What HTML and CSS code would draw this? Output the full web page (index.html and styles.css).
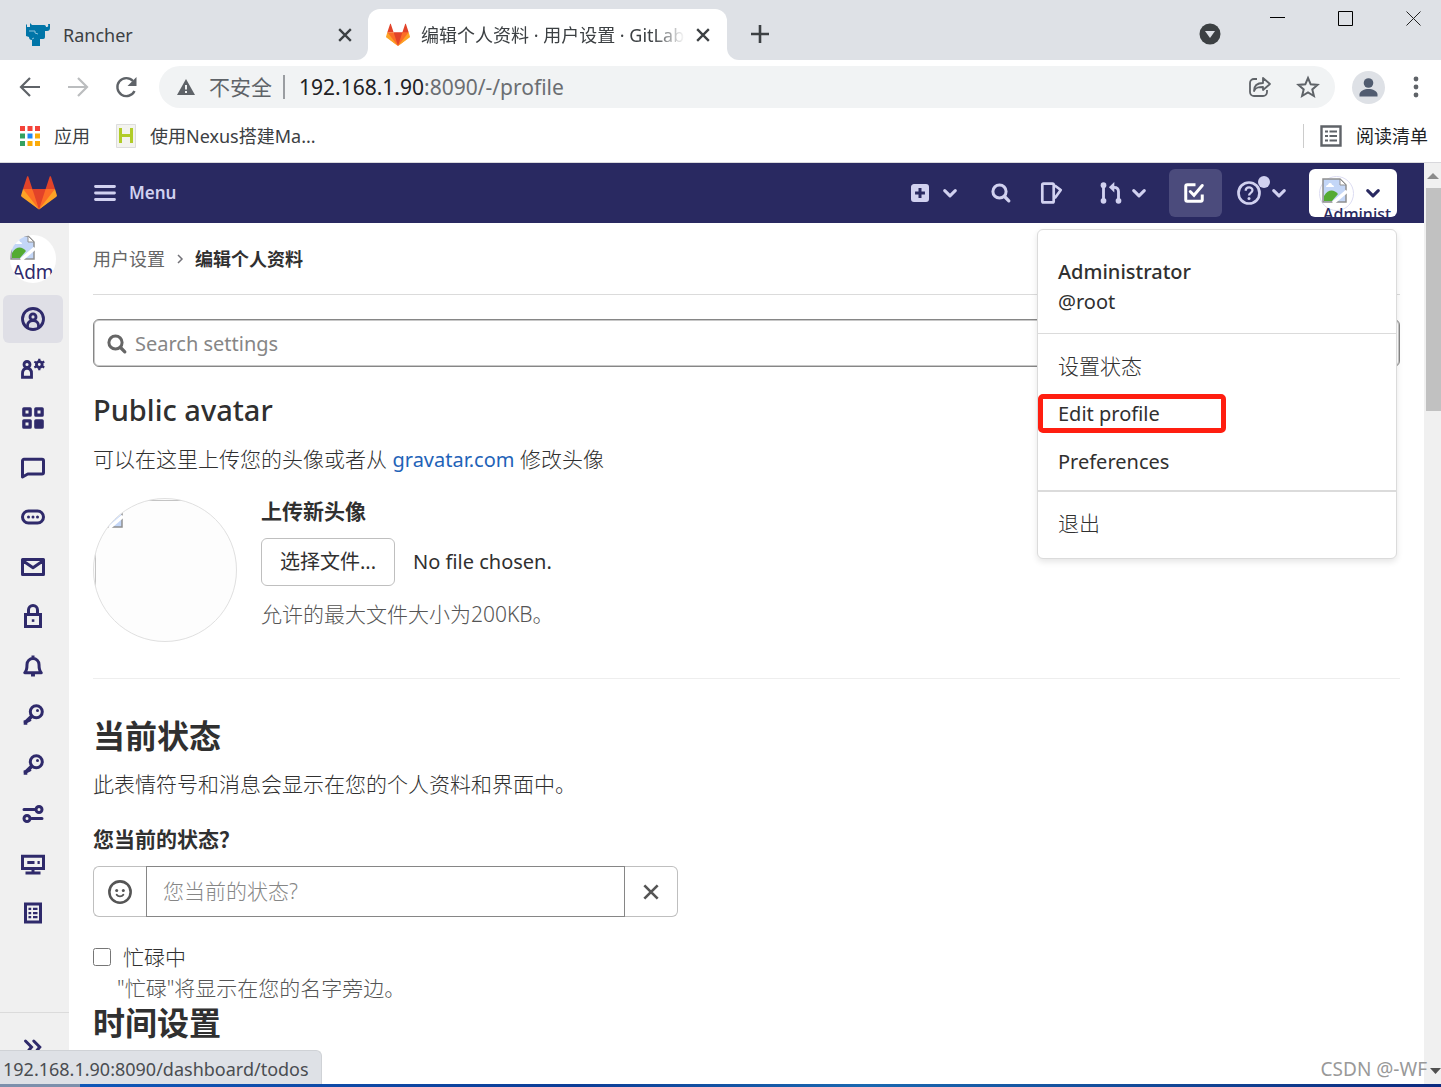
FILE: index.html
```html
<!DOCTYPE html>
<html lang="zh-CN">
<head>
<meta charset="utf-8">
<title>编辑个人资料 · 用户设置 · GitLab</title>
<link rel="stylesheet" href="styles.css">
</head>
<body>
<svg class="defs" aria-hidden="true">
  <symbol id="tanuki" viewBox="0 0 36 36">
    <path fill="#e24329" d="M2 14l9.38 9v-9l-4-12.28c-.205-.632-1.176-.632-1.38 0zM34 14l-9.38 9v-9l4-12.28c.205-.632 1.176-.632 1.38 0zM18 34.38L3 14h30z"/>
    <path fill="#fc6d26" d="M18 34.38L11.38 14H2l4 11zM18 34.38L24.62 14H34l-4 11z"/>
    <path fill="#fca326" d="M2 14L.1 20.16c-.18.565 0 1.2.5 1.56l17.42 12.66zM34 14l1.9 6.16c.18.565 0 1.2-.5 1.56L18 34.38z"/>
  </symbol>
  <symbol id="close" viewBox="0 0 12 12"><path d="M1 1l10 10M11 1L1 11" fill="none" stroke="currentColor" stroke-width="2"/></symbol>
  <symbol id="chevron" viewBox="0 0 12 12"><path d="M1.500 4L6 8.500 10.500 4" fill="none" stroke="currentColor" stroke-width="2.600" stroke-linecap="round" stroke-linejoin="round"/></symbol>
  <symbol id="search" viewBox="0 0 16 16"><circle cx="7" cy="7" r="4.400" fill="none" stroke="currentColor" stroke-width="2"/><path d="M10.500 10.500l2.700 2.700" fill="none" stroke="currentColor" stroke-width="2.200" stroke-linecap="round"/></symbol>
  <symbol id="key" viewBox="0 0 16 16"><circle cx="10.200" cy="5.800" r="4" fill="none" stroke="currentColor" stroke-width="2"/><circle cx="11" cy="5" r="1" fill="currentColor"/><path d="M7.600 8.400L2.300 13.600M3 11.500v3M5 10.800l1 1.600" fill="none" stroke="currentColor" stroke-width="2.400"/></symbol>
  <symbol id="broken" viewBox="0 0 26 26">
    <path fill="#c3d6f7" stroke="#8f8f8f" stroke-width="1.500" d="M1 1h17l6 6v17H1z"/>
    <path fill="#fff" d="M4 9c0-2 2-2 2-2 1-3 4-2 4 0 2 0 2 2 2 2z"/>
    <path fill="#54ab33" d="M2 23v-5c4-7 10-7 14-2l-6 7z"/>
    <path fill="#fff" stroke="#8f8f8f" d="M18 1v6h6z"/>
    <path stroke="#fff" stroke-width="3.500" d="M11 25L25 13"/>
  </symbol>
</svg>

<div class="tabstrip">
  <div class="tab">
    <svg class="i24" viewBox="0 0 24 24" fill="#0075a8"><path d="M0 2l1-1v3h3V0l2 2h12c2 0 2 2 2 2h1c2 0 1-3 1-3h2v4c0 2-1 3-3 3h-2v6c0 2-2 2-2 2h-3v7H6v-6c-2 0-3-1-3-3l-3-1z"/><path d="M3 8h6v2l3 1M6 16l2-1" stroke="#8dc3dc" fill="none"/></svg>
    <span class="tab-title">Rancher</span>
    <button class="plain" aria-label="关闭"><svg class="i12"><use href="#close"/></svg></button>
  </div>
  <div class="slot"><div class="tab active">
    <svg class="i24"><use href="#tanuki"/></svg>
    <span class="tab-title fade">编辑个人资料 · 用户设置 · GitLab</span>
    <button class="plain" aria-label="关闭"><svg class="i12"><use href="#close"/></svg></button>
  </div></div>
  <div class="strip-rest">
    <button class="plain new" aria-label="新标签页"><svg class="i18" viewBox="0 0 18 18"><path d="M9 0v18M0 9h18" stroke="currentColor" stroke-width="2.600"/></svg></button>
    <button class="plain tabs-menu" aria-label="搜索标签页"><svg width="22" height="22" viewBox="0 0 22 22"><circle cx="11" cy="11" r="10.500" fill="#3c4043"/><path d="M6 8h10l-5 7z" fill="#dee1e6"/></svg></button>
    <div class="window">
      <button class="plain" aria-label="最小化"><svg class="i16" viewBox="0 0 16 16"><path d="M0 6.500h15" stroke="#000"/></svg></button>
      <button class="plain" aria-label="最大化"><svg class="i16" viewBox="0 0 16 16"><path d="M.5.500h14v14H.5z" fill="none" stroke="#000"/></svg></button>
      <button class="plain" aria-label="关闭窗口"><svg class="i16" viewBox="0 0 16 16"><path d="M.5.500l14 14M14.500.500l-14 14" stroke="#222"/></svg></button>
    </div>
  </div>
</div>

<div class="toolbar">
  <button class="plain" aria-label="后退"><svg class="i24" viewBox="0 0 24 24"><path d="M22 12H3M12 3l-9 9 9 9" fill="none" stroke="#5f6368" stroke-width="2.200"/></svg></button>
  <button class="plain" aria-label="前进"><svg class="i24" viewBox="0 0 24 24"><path d="M2 12h19M12 3l9 9-9 9" fill="none" stroke="#bbbdbf" stroke-width="2.200"/></svg></button>
  <button class="plain" aria-label="重新加载"><svg class="i24" viewBox="0 0 24 24"><path d="M20.500 16A9 9 0 1 1 19 6" fill="none" stroke="#5f6368" stroke-width="2.400"/><path d="M22.500 2v9h-9z" fill="#5f6368"/></svg></button>
  <div class="omnibox">
    <svg class="i18 warn" viewBox="0 0 18 18"><path d="M9 1l9 16H0z" fill="#5f6368"/><path d="M9 7v4.500M9 13v2" stroke="#f1f3f4" stroke-width="2"/></svg>
    <span class="insecure">不安全</span>
    <span class="url"><b>192.168.1.90</b>:8090/-/profile</span>
    <button class="plain" aria-label="分享"><svg class="i24" viewBox="0 0 24 24" fill="none" stroke="#5f6368" stroke-width="1.800"><path d="M9 4H6a4 4 0 0 0-4 4v9a4 4 0 0 0 4 4h9a4 4 0 0 0 4-4v-2"/><path d="M6 16c0-6 3-8 9-8V3l7 6-7 6v-3c-4 0-7 0-9 4z" stroke-linejoin="round"/></svg></button>
    <button class="plain" aria-label="收藏"><svg class="i24" viewBox="0 0 24 24"><path d="M12 3l2.700 6.300 6.800.600-5.200 4.500 1.600 6.600-5.900-3.500L6.100 21l1.600-6.600L2.500 9.900l6.800-.600z" fill="none" stroke="#5f6368" stroke-width="2"/></svg></button>
  </div>
  <button class="plain account" aria-label="用户"><svg width="33" height="33" viewBox="0 0 33 33"><circle cx="16.500" cy="16.500" r="16.500" fill="#dee1e6"/><g fill="#515c70"><circle cx="16.500" cy="12" r="4.800"/><path d="M7.500 25.500v-2c0-3.500 5-5.500 9-5.500s9 2 9 5.500v2z"/></g></svg></button>
  <button class="plain more" aria-label="更多"><svg width="6" height="22" viewBox="0 0 6 22" fill="#5f6368"><circle cx="3" cy="3" r="2.400"/><circle cx="3" cy="11" r="2.400"/><circle cx="3" cy="19" r="2.400"/></svg></button>
</div>

<nav class="bookmarks">
  <a href="#"><svg width="20" height="20" viewBox="0 0 20 20"><path fill="#f4433a" d="M0 0h5v5H0zM7.500 0h5v5h-5zM15 0h5v5h-5z"/><path fill="#34a160" d="M0 7.500h5v5H0zM0 15h5v5H0z"/><path fill="#2088f5" d="M7.500 7.500h5v5h-5z"/><path fill="#fbab08" d="M15 7.500h5v5h-5zM7.500 15h5v5h-5zM15 15h5v5h-5z"/></svg>应用</a>
  <a href="#"><svg width="20" height="24" viewBox="0 0 20 24"><path d="M.5.500h19v23H.5z" fill="#f3f3ee" stroke="#ddd"/><path d="M4.500 4v15M15.500 4v15M4.500 11.500h11" stroke="#b1cc28" stroke-width="3"/></svg>使用Nexus搭建Ma...</a>
  <a href="#" class="reading"><svg width="22" height="22" viewBox="0 0 22 22"><path d="M1.500 1.500h19v19h-19z" fill="none" stroke="#5f6368" stroke-width="2.400"/><path d="M5 6.500h3M5 11h3M5 15.500h3M9.500 6.500H17M9.500 11H17M9.500 15.500H17" stroke="#5f6368" stroke-width="2"/></svg>阅读清单</a>
</nav>

<div class="viewport">
  <div class="page">
    <header class="navbar">
      <a href="#" class="logo" aria-label="GitLab"><svg class="i36"><use href="#tanuki"/></svg></a>
      <button class="plain menu-btn"><svg width="22" height="18" viewBox="0 0 22 18"><path d="M1.500 2.500h19M1.500 9h19M1.500 15.500h19" stroke="currentColor" stroke-width="2.800" stroke-linecap="round"/></svg>Menu</button>
      <div class="tools">
        <button class="plain pair new-menu" aria-label="新建"><svg class="i24" viewBox="0 0 16 16"><path fill="currentColor" fill-rule="evenodd" d="M4 2h8a2 2 0 0 1 2 2v8a2 2 0 0 1-2 2H4a2 2 0 0 1-2-2V4c0-1.100.9-2 2-2zm3 2.700V7H4.700v2H7v2.300h2V9h2.300V7H9V4.700z"/></svg><svg class="i12"><use href="#chevron"/></svg></button>
        <button class="plain search-btn" aria-label="搜索"><svg class="i24"><use href="#search"/></svg></button>
        <a href="#" class="issues" aria-label="议题"><svg class="i24" viewBox="0 0 16 16" fill="none" stroke="currentColor" stroke-width="1.800" stroke-linejoin="round"><path d="M3 1.700h6a.8.800 0 0 1 .8.800v11a.8.800 0 0 1-.8.800H3a.8.800 0 0 1-.8-.8v-11a.8.800 0 0 1 .8-.8zM10.500 3l4 3-4 5.500"/></svg></a>
        <button class="plain pair merge" aria-label="合并请求"><svg class="i24" viewBox="0 0 16 16" fill="none" stroke="currentColor" stroke-width="1.900"><path d="M3 3v10M8.500 4.200H10c2 0 3 1 3 3V13"/><g fill="currentColor" stroke="none"><circle cx="3" cy="2.800" r="1.900"/><circle cx="3" cy="13.200" r="1.900"/><circle cx="13" cy="13.200" r="1.900"/><path d="M10.200.700v7L6.600 4.200z"/></g></svg><svg class="i12"><use href="#chevron"/></svg></button>
        <a href="#" class="todo" aria-label="待办事项"><svg class="i24" viewBox="0 0 16 16" fill="none" stroke="#fff" stroke-width="2"><path d="M9 2.500H3.500a1 1 0 0 0-1 1v9a1 1 0 0 0 1 1h9a1 1 0 0 0 1-1V9"/><path d="M5.500 7L8 9.500l5.500-6.500" stroke-linecap="round"/></svg></a>
        <button class="plain pair help" aria-label="帮助"><svg class="i24" viewBox="0 0 16 16"><circle cx="8" cy="8" r="7" fill="none" stroke="currentColor" stroke-width="1.800"/><path d="M5.800 6.500C5.800 3.500 10.300 3.600 10.300 6.200 10.300 8 8 7.800 8 9.700" fill="none" stroke="currentColor" stroke-width="1.500"/><circle cx="8" cy="11.700" r="1" fill="currentColor"/></svg><i class="dot"></i><svg class="i12"><use href="#chevron"/></svg></button>
        <button class="plain user" aria-label="Administrator">
          <span class="user-avatar"><svg width="26" height="26"><use href="#broken"/></svg></span>
          <svg class="i12"><use href="#chevron"/></svg>
          <span class="user-alt">Administ</span>
        </button>
      </div>
    </header>

    <div class="body">
      <aside class="sidebar">
        <a href="#" class="side-avatar"><svg width="26" height="26"><use href="#broken"/></svg><span>Adm</span></a>
        <nav class="side-nav">
          <a href="#" class="current" aria-label="个人资料"><svg class="i24" viewBox="0 0 16 16" fill="none" stroke="currentColor" stroke-width="1.900"><circle cx="8" cy="8" r="7"/><circle cx="8" cy="6.600" r="2"/><path d="M4.300 13.500v-1c0-2 1.500-3.500 3.700-3.500s3.700 1.500 3.700 3.500v1"/></svg></a>
          <a href="#" aria-label="账户"><svg class="i24" viewBox="0 0 16 16" fill="none" stroke="currentColor" stroke-width="1.900"><circle cx="4" cy="5" r="2"/><path d="M1 13.500V11c0-2 1-3.500 3-3.500S7 9 7 11v2.500z"/><circle cx="12.200" cy="5" r="1.900"/><path d="M12.200 1.200v2M12.200 6.800v2M8.900 3.100l1.700 1M13.800 6l1.700 1M8.900 7l1.700-1M13.800 4l1.700-1" stroke-width="1.500"/></svg></a>
          <a href="#" aria-label="应用"><svg class="i24" viewBox="0 0 16 16" fill="none" stroke="currentColor" stroke-width="2.200" stroke-linejoin="round"><path d="M1.900 1.900h4.200v4.200H1.900zM9.900 1.900h4.200v4.200H9.900zM1.900 9.900h4.200v4.200H1.900z"/><path d="M9.900 9.900h4.200v4.200H9.900z" fill="currentColor"/></svg></a>
          <a href="#" aria-label="聊天"><svg class="i24" viewBox="0 0 16 16" fill="none" stroke="currentColor" stroke-width="2" stroke-linejoin="round"><path d="M1 14V3.200a1 1 0 0 1 1-1h12a1 1 0 0 1 1 1V11a1 1 0 0 1-1 1H4.500z"/></svg></a>
          <a href="#" aria-label="访问令牌"><svg class="i24" viewBox="0 0 16 16"><rect x="1" y="4" width="14" height="8" rx="4" fill="none" stroke="currentColor" stroke-width="2"/><g fill="currentColor"><circle cx="5" cy="8" r="1"/><circle cx="8" cy="8" r="1"/><circle cx="11" cy="8" r="1"/></g></svg></a>
          <a href="#" aria-label="电子邮件"><svg class="i24" viewBox="0 0 16 16" fill="none" stroke="currentColor" stroke-width="2" stroke-linejoin="round"><path d="M1 3h14v10H1zM1.500 4L8 8.500 14.500 4"/></svg></a>
          <a href="#" aria-label="密码"><svg class="i24" viewBox="0 0 16 16" fill="none" stroke="currentColor" stroke-width="2"><path d="M3 7h10v8H3zM5 7V4a3 3 0 0 1 6 0v3"/><path d="M7.200 10.200h1.700v1.700H7.200z" fill="currentColor" stroke="none"/></svg></a>
          <a href="#" aria-label="通知"><svg class="i24" viewBox="0 0 16 16" fill="none" stroke="currentColor" stroke-width="2" stroke-linejoin="round"><path d="M2.500 12.500h11c-1.500-1.500-1.500-3-1.500-5.500a4 4 0 0 0-8 0c0 2.500 0 4-1.500 5.500z"/><path d="M8 1v1.500M6.700 14h2.600"/></svg></a>
          <a href="#" aria-label="SSH 密钥"><svg class="i24"><use href="#key"/></svg></a>
          <a href="#" aria-label="GPG 密钥"><svg class="i24"><use href="#key"/></svg></a>
          <a href="#" aria-label="偏好设置"><svg class="i24" viewBox="0 0 16 16" fill="none" stroke="currentColor" stroke-width="2" stroke-linecap="round"><path d="M2 5h7M7 11h7"/><circle cx="12" cy="5" r="2"/><circle cx="4" cy="11" r="2"/></svg></a>
          <a href="#" aria-label="活动会话"><svg class="i24" viewBox="0 0 16 16" fill="none" stroke="currentColor" stroke-width="2"><path d="M1 2.900h14V11H1zM3 14h10M8 11v3M4.200 7H9M11 7h1.500"/></svg></a>
          <a href="#" aria-label="验证日志"><svg class="i24" viewBox="0 0 16 16" fill="none" stroke="currentColor" stroke-width="2"><path d="M3 2h10v12H3z"/><path d="M5 5.200h1.800M8 5.200h3M5 8h1.800M8 8h3M5 10.800h1.800M8 10.800h3" stroke-width="1.500"/></svg></a>
        </nav>
        <button class="plain collapse" aria-label="收起侧边栏"><svg class="i24" viewBox="0 0 16 16" fill="none" stroke="currentColor" stroke-width="2" stroke-linecap="round"><path d="M3 4l4 4-4 5M8.500 4l4 4-4 5"/></svg></button>
      </aside>

      <main class="content">
        <nav class="crumbs"><a href="#">用户设置</a><svg width="8" height="12" viewBox="0 0 8 12"><path d="M2 2l4 4-4 4" fill="none" stroke="#737278" stroke-width="1.500"/></svg><a href="#" class="here">编辑个人资料</a></nav>
        <label class="search"><svg class="i24"><use href="#search"/></svg><input type="search" placeholder="Search settings" aria-label="Search settings"></label>
        <h4>Public avatar</h4>
        <p class="intro">可以在这里上传您的头像或者从 <a href="#">gravatar.com</a> 修改头像</p>
        <section class="avatar-row">
          <div class="big-avatar"><div class="frame"><svg width="26" height="26"><use href="#broken"/></svg></div></div>
          <div>
            <h5>上传新头像</h5>
            <div class="file"><button class="choose">选择文件...</button><span>No file chosen.</span></div>
            <p class="hint">允许的最大文件大小为200KB。</p>
          </div>
        </section>
        <hr>
        <h2>当前状态</h2>
        <p class="status-intro">此表情符号和消息会显示在您的个人资料和界面中。</p>
        <label class="field-label" for="status">您当前的状态？</label>
        <div class="group">
          <button aria-label="表情"><svg class="i24" viewBox="0 0 16 16"><circle cx="8" cy="8" r="7.100" fill="none" stroke="currentColor" stroke-width="1.700"/><circle cx="5.800" cy="7" r="1" fill="currentColor"/><circle cx="10.200" cy="7" r="1" fill="currentColor"/><path d="M5.800 9.800c1 1.500 3.400 1.500 4.400 0" fill="none" stroke="currentColor" stroke-width="1.300" stroke-linecap="round"/></svg></button>
          <input id="status" type="text" placeholder="您当前的状态?">
          <button aria-label="清除状态"><svg class="i16"><use href="#close"/></svg></button>
        </div>
        <div class="check"><input type="checkbox" id="busy"><label for="busy">忙碌中</label></div>
        <p class="busy-help">"忙碌"将显示在您的名字旁边。</p>
        <h2 class="time">时间设置</h2>
      </main>
    </div>

    <div class="dropdown">
      <a href="#" class="who"><strong>Administrator</strong><span>@root</span></a>
      <div class="items">
        <a href="#">设置状态</a>
        <a href="#" class="marked">Edit profile</a>
        <a href="#">Preferences</a>
      </div>
      <div class="items last"><a href="#">退出</a></div>
    </div>
  </div>
  <div class="scrollbar"><svg width="17" height="25" viewBox="0 0 17 25"><path d="M3 16h12L9 10z" fill="#8b8b8b"/></svg><i></i><svg class="down" width="17" height="25" viewBox="0 0 17 25"><path d="M6 9h11l-5.500 6z" fill="#505050"/></svg></div>
  <div class="link-status">192.168.1.90:8090/dashboard/todos</div>
  <div class="watermark">CSDN @-WF</div>
</div>
<div class="taskbar"></div>
</body>
</html>
```

FILE: styles.css
```css
*, ::before, ::after { box-sizing: border-box; margin: 0; padding: 0; }
body {
  height: 100vh;
  display: flex;
  flex-direction: column;
  overflow: hidden;
  background: #fff;
  color: #303030;
  font: 20px/30px "Noto Sans", "Noto Sans CJK SC", sans-serif;
}
svg { display: block; flex: none; }
a { color: inherit; text-decoration: none; }
input, button { font: inherit; color: inherit; }
.defs { position: absolute; width: 0; height: 0; }
.plain { background: none; border: 0; display: flex; align-items: center; flex: none; }
.i12 { width: 14px; height: 14px; }
.i16 { width: 16px; height: 16px; }
.i18 { width: 18px; height: 18px; }
.i24 { width: 24px; height: 24px; }
.i36 { width: 36px; height: 36px; }

/* Browser tabs */
.tabstrip { display: flex; height: 60px; flex: none; color: #3c4043; font-size: 18px; }
.tab { width: 368px; padding: 9px 16px 0 26px; display: flex; align-items: center; gap: 13px; background: #dee1e6; border-radius: 0 0 12px 0; }
.tab-title { flex: 1; min-width: 0; white-space: nowrap; overflow: hidden; }
.slot { background: #dee1e6; padding-top: 9px; }
.tab.active { width: 359px; height: 51px; padding: 0 17px 0 18px; gap: 11px; background: #fff; border-radius: 12px 12px 0 0; }
.fade { mask-image: linear-gradient(90deg, #000 88%, transparent); }
.strip-rest { flex: 1; display: flex; background: #dee1e6; border-radius: 0 0 0 12px; padding-left: 24px; }
.new { padding-top: 8px; }
.tabs-menu { margin-left: auto; padding-top: 8px; }
.window { display: flex; align-items: flex-start; gap: 52px; padding: 11px 19px 0 49px; }

/* Address bar */
.toolbar { display: flex; align-items: center; height: 54px; flex: none; padding: 0 22px 0 18px; gap: 24px; }
.omnibox { flex: 1; height: 42px; margin-left: -3px; border-radius: 21px; background: #f1f3f4; display: flex; align-items: center; padding: 0 15px 0 18px; gap: 24px; }
.insecure { margin-left: -10px; padding-right: 11px; border-right: 2px solid #9a9da1; line-height: 24px; font-size: 21px; color: #5f6368; }
.url { flex: 1; margin-left: -10px; font-size: 21px; color: #6b6e72; }
.url b { font-weight: 400; color: #202124; }
.account { margin-left: -7px; }
.more { margin-left: 4px; }

/* Bookmarks */
.bookmarks { display: flex; align-items: center; height: 49px; flex: none; padding: 0 13px 5px 20px; gap: 26px; border-bottom: 1px solid #d8d8dc; font-size: 18px; color: #3c4043; }
.bookmarks a { display: flex; align-items: center; gap: 14px; }
.reading { margin-left: auto; border-left: 1px solid #ccc; padding-left: 16px; line-height: 24px; color: #202124; }

/* Viewport */
.viewport { flex: 1; min-height: 0; display: flex; position: relative; }
.page { flex: 1; min-width: 0; display: flex; flex-direction: column; position: relative; overflow: hidden; }
.scrollbar { width: 17px; background: #f0f0f0; display: flex; flex-direction: column; }
.scrollbar i { height: 223px; margin-left: 2px; background: #c1c1c1; }
.scrollbar .down { margin-top: auto; }
.taskbar { height: 3px; flex: none; background: linear-gradient(90deg, #7c90ac 80px, #1058b8 80px, #0c3d97 40%, #1a68b0 60%, #0b2a80); }

/* GitLab navigation bar */
.navbar { height: 60px; flex: none; display: flex; align-items: center; padding: 0 27px 0 21px; background: #292961; color: #d1d1f0; }
.menu-btn { margin-left: 37px; gap: 13px; font-size: 17px; font-weight: 600; }
.tools { margin-left: auto; display: flex; align-items: center; }
.pair { gap: 11px; }
.search-btn { margin-left: 32px; }
.issues { margin-left: 26px; }
.merge { margin-left: 36px; gap: 9px; }
.todo { width: 53px; height: 48px; margin: 0 15px 0 23px; padding-left: 13px; display: flex; align-items: center; border-radius: 6px; background: #4b4b7c; }
.help { position: relative; }
.dot { position: absolute; left: 21px; top: -5px; width: 12px; height: 12px; border-radius: 50%; background: #d1d1f0; }
.user { width: 88px; height: 48px; margin-left: 23px; padding: 0 17px 0 10px; justify-content: space-between; position: relative; overflow: hidden; border-radius: 6px; background: #fff; color: #292961; }
.user-avatar { width: 35px; height: 35px; padding: 1px 2px; border: 1px solid #dcdcf2; border-radius: 50%; }
.user-alt { position: absolute; left: 14px; top: 35px; line-height: 20px; font-size: 16px; font-weight: 500; }

/* Sidebar */
.body { flex: 1; min-height: 0; display: flex; }
.sidebar { width: 69px; flex: none; display: flex; flex-direction: column; background: #f0f0f0; color: #2f2a6b; }
.side-avatar { width: 46px; height: 48px; margin: 12px 0 12px 10px; border-radius: 50%; background: #fff; overflow: hidden; font-size: 19px; line-height: 22px; }
.side-avatar span { display: block; padding-left: 2px; }
.side-nav { display: flex; flex-direction: column; justify-content: space-between; height: 642px; flex: none; padding: 0 6px 0 3px; }
.side-nav a { height: 48px; display: flex; align-items: center; justify-content: center; border-radius: 6px; }
.side-nav .current { background: #dfdfe6; }
.collapse { margin-top: auto; height: 72px; justify-content: center; align-items: flex-start; padding: 22px 4px 0 0; border-top: 1px solid #dbdbdb; }

/* Settings page */
.content { flex: 1; min-width: 0; padding: 0 24px; }
.crumbs { height: 72px; display: flex; align-items: center; gap: 11px; border-bottom: 1px solid #dbdbdb; font-size: 18px; color: #666; }
.here { font-weight: 700; color: #303030; }
.search { height: 48px; margin-top: 24px; padding: 1px 11px 0; display: flex; align-items: center; gap: 6px; border: 1px solid #868686; border-radius: 6px; color: #666; box-shadow: inset 0 0 0 1px #c8c8c8; }
.search input { flex: 1; border: 0; outline: 0; background: none; }
::placeholder { color: #868686; opacity: 1; }
h4 { margin-top: 25px; font-size: 29px; line-height: 36px; font-weight: 500; }
.intro { margin-top: 16px; font-size: 21px; font-weight: 300; }
.intro a { font-size: 20px; font-weight: 400; color: #1f63b8; }
.avatar-row { display: flex; gap: 24px; height: 144px; margin-top: 23px; }
.big-avatar { width: 144px; height: 144px; padding: 1px; border: 1px solid #e0e0e0; border-radius: 50%; background: #fdfdfd; overflow: hidden; }
.frame { height: 100%; padding: 2px; border: solid #c4c4c4; border-width: 1px 0 0 1px; }
h5 { font-size: 21px; line-height: 26px; }
.file { margin-top: 14px; display: flex; align-items: center; gap: 18px; }
.choose { width: 134px; height: 48px; border: 1px solid #bfbfbf; border-radius: 6px; background: #fff; white-space: nowrap; }
.hint { margin-top: 13px; font-size: 21px; font-weight: 300; color: #555; }
hr { margin-top: 36px; border: 0; border-top: 1px solid #eee; }
h2 { margin-top: 37px; font-size: 32px; line-height: 40px; }
.status-intro { margin-top: 13px; font-size: 21px; font-weight: 300; }
.field-label { display: block; margin-top: 25px; font-size: 21px; font-weight: 700; }
.group { display: flex; width: 585px; height: 51px; margin-top: 12px; }
.group button { width: 53px; display: flex; align-items: center; justify-content: center; border: 1px solid #bfbfbf; background: #fff; color: #555; }
.group button:first-child { border-right: 0; border-radius: 6px 0 0 6px; }
.group button:last-child { border-left: 0; border-radius: 0 6px 6px 0; }
.group input { flex: 1; min-width: 0; padding: 0 16px 2px; border: 1px solid #868686; font-size: 21px; font-weight: 300; }
.check { display: flex; align-items: center; gap: 12px; margin-top: 25px; font-size: 21px; font-weight: 300; }
.check input { width: 18px; height: 18px; }
.busy-help { margin-top: 1px; padding-left: 24px; font-size: 21px; font-weight: 300; color: #555; }
.time { margin-top: 0; }

/* User menu */
.dropdown { position: absolute; right: 27px; top: 66px; width: 360px; background: #fff; border: 1px solid #dbdbdb; border-radius: 6px; box-shadow: 0 3px 6px rgba(0, 0, 0, .1); }
.dropdown a { display: block; padding: 9px 20px; }
.dropdown .who { padding: 27px 20px 16px; }
.who strong, .who span { display: block; }
.who strong { font-weight: 500; }
.items { border-top: 1px solid #dbdbdb; padding: 8px 0 4px; }
.items a:first-child { font-size: 21px; font-weight: 300; }
.items.last { border-top-width: 2px; padding: 7px 0 11px; }
.marked { position: relative; }
.marked::after { content: ""; position: absolute; left: 0; top: 4px; width: 188px; height: 39px; border: 5px solid #ff1e10; border-radius: 5px; }

.watermark { position: absolute; right: 14px; bottom: 0; font-size: 19px; color: #999; white-space: nowrap; }
.link-status { position: absolute; left: 0; bottom: 0; height: 34px; padding: 3px 12px 0 3px; background: #dee1e6; border: 1px solid #cfd2d6; border-width: 1px 1px 0 0; border-radius: 0 6px 0 0; font-size: 18px; color: #4a4d51; }
```
